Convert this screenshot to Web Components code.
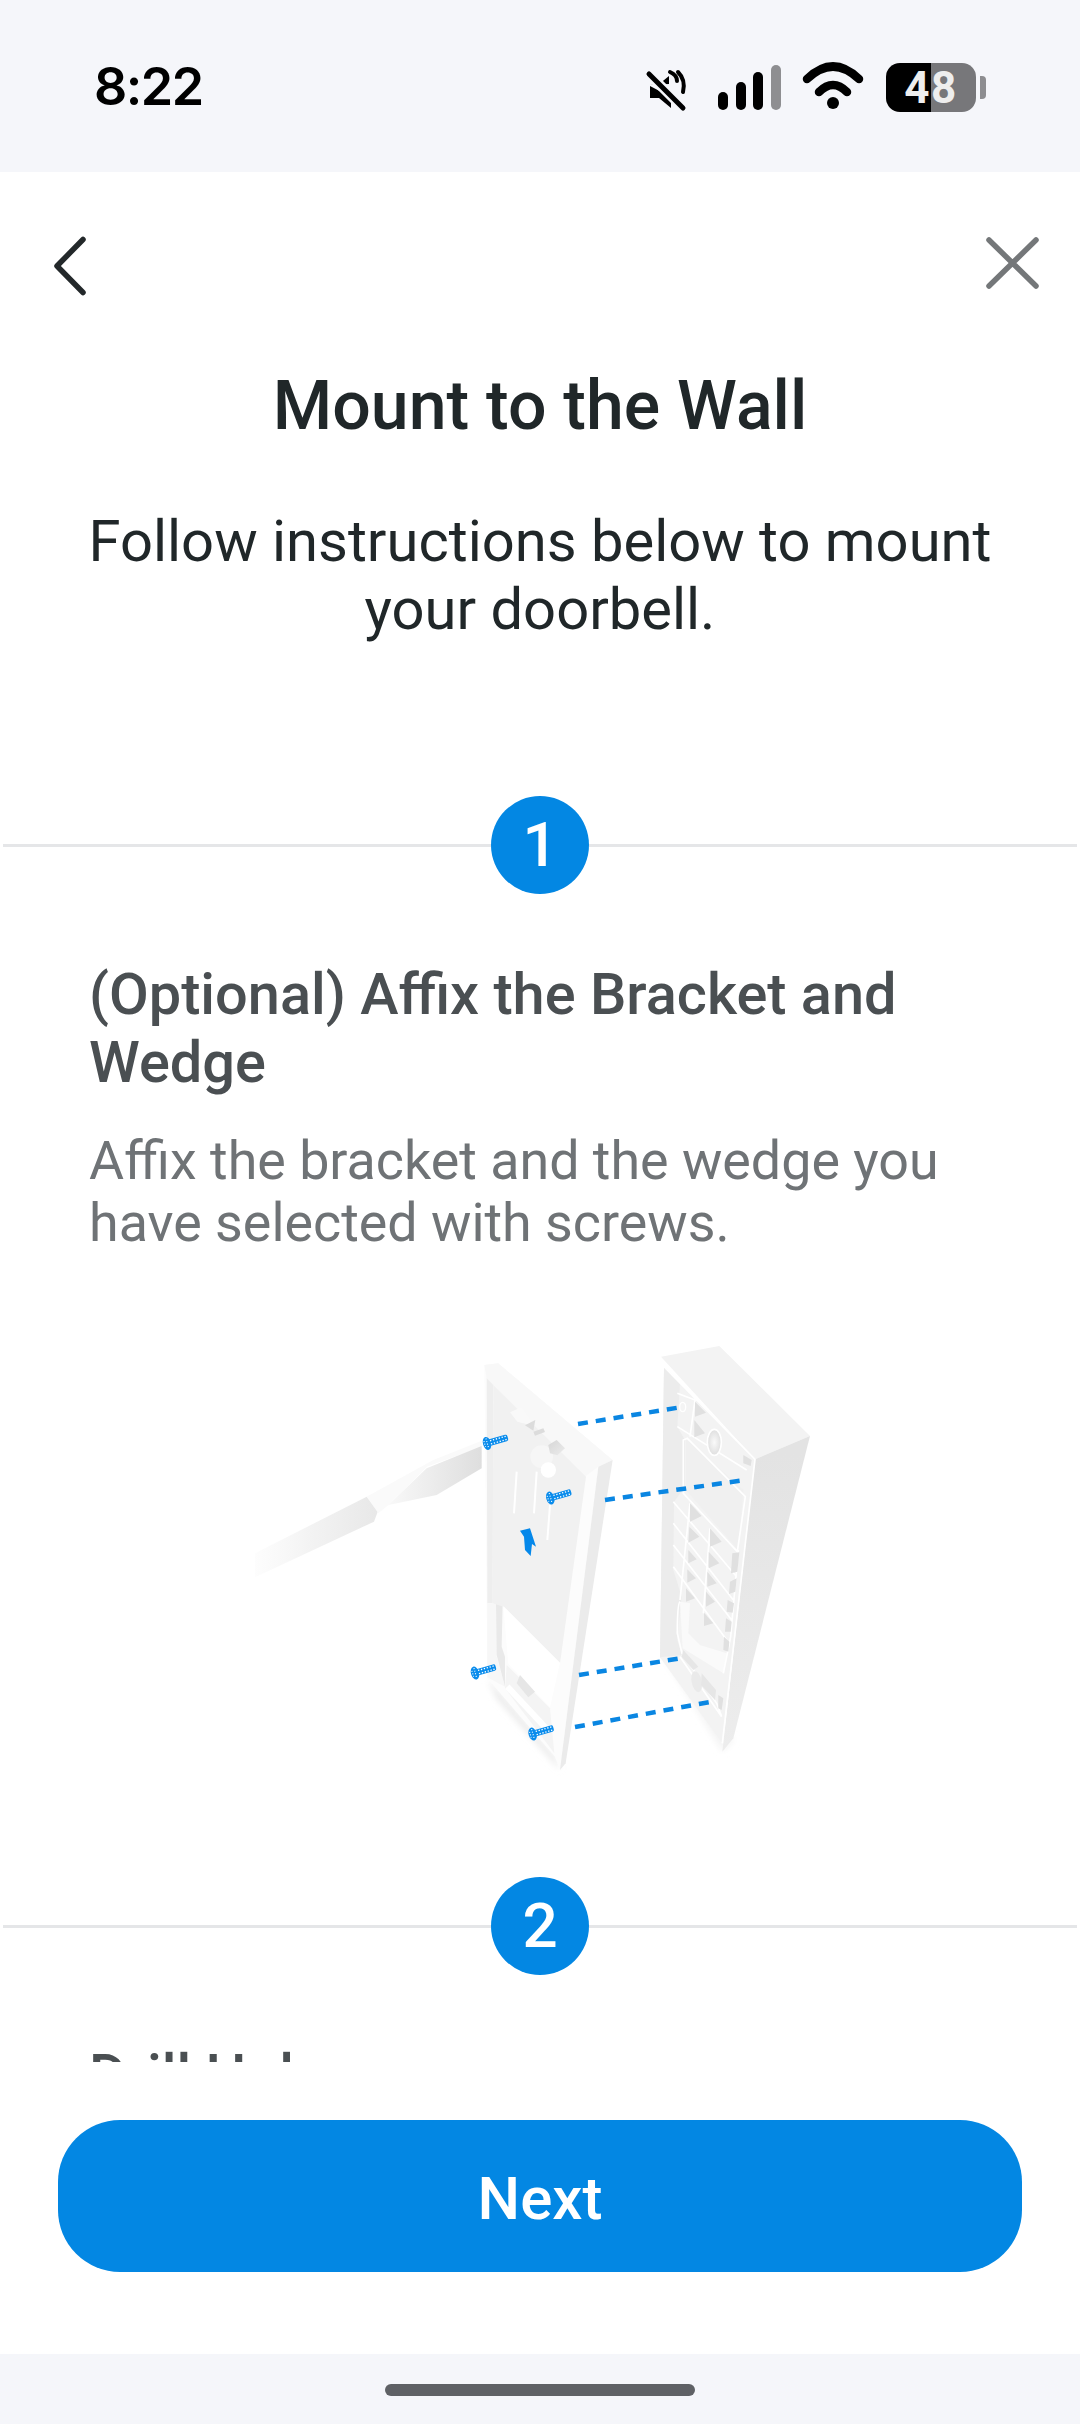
<!DOCTYPE html>
<html>
<head>
<meta charset="utf-8">
<title>Mount to the Wall</title>
<style>
    html, body { margin: 0; padding: 0; background: #fff; }
    body { font-family: Roboto, "Liberation Sans", sans-serif; }
</style>
</head>
<body>
<app-screen>
    <status-bar slot="top"></status-bar>
    <nav-bar></nav-bar>
    <page-intro heading="Mount to the Wall">Follow instructions below to mount your doorbell.</page-intro>
    <step-block number="1" heading="(Optional) Affix the Bracket and Wedge">
        Affix the bracket and the wedge you have selected with screws.
        <mount-figure slot="figure"></mount-figure>
    </step-block>
    <step-block number="2" heading="Drill Holes"></step-block>
    <primary-button slot="bottom">Next</primary-button>
    <home-bar slot="end"></home-bar>
</app-screen>

<script>
class AppScreen extends HTMLElement
{
    constructor()
    {
        super();
        const Shadow = this.attachShadow({mode: "open"});
        Shadow.innerHTML = `
        <style>
            :host { display: flex; flex-direction: column; width: 1080px; height: 2424px; overflow: hidden; }
            .Scroll { flex: 1; min-height: 0; overflow: hidden; }
            .Footer { height: 292px; box-sizing: border-box; padding: 58px 58px 0; }
        </style>
        <slot name="top"></slot>
        <div class="Scroll"><slot></slot></div>
        <div class="Footer"><slot name="bottom"></slot></div>
        <slot name="end"></slot>
        `;
    }
}

class StatusBar extends HTMLElement
{
    constructor()
    {
        super();
        const Shadow = this.attachShadow({mode: "open"});
        Shadow.innerHTML = `
        <style>
            :host { display: flex; align-items: flex-start; height: 172px; background: #f5f6fa; color: #000; }
            .Time { margin: 52px 0 0 94px; font: 600 52px/70px Inter, Roboto, sans-serif; letter-spacing: -1.5px; flex: 1; }
            svg { display: block; margin-top: 60px; }
            .Battery {
                margin: 63px 0 0 1px;
                width: 90px;
                height: 49px;
                border-radius: 14px;
                background: linear-gradient(90deg, #000 50%, #77777a 50%);
                color: #eee;
                font: 700 44px/50px Roboto, sans-serif;
                text-align: center;
                letter-spacing: 1.5px;
            }
            .Nub { margin: 76px 94px 0 4px; width: 6px; height: 23px; border-radius: 0 4px 4px 0; background: #8d8d90; }
        </style>
        <div class="Time">8:22</div>
        <svg width="240" height="56" viewBox="645 60 240 56">
            <path d="M650 85h8l11-9v8zM650 86v12h9l12 10V97z" fill="#000"/>
            <path d="M670 72q7 3 7 9M678 72q8 8 5 20" fill="none" stroke="#000" stroke-width="4" stroke-linecap="round"/>
            <path d="M649 74l34 34" stroke="#f5f6fa" stroke-width="10"/>
            <path d="M649 74l34 34" stroke="#000" stroke-width="5" stroke-linecap="round"/>
            <rect x="718" y="92" width="10" height="18" rx="5"/>
            <rect x="736" y="82" width="10" height="28" rx="5"/>
            <rect x="753" y="72" width="10" height="38" rx="5"/>
            <rect x="771" y="65" width="10" height="45" rx="5" fill="#8e8e91"/>
            <path d="M807 79Q833 54 859 79M819 92Q833 78 847 92" fill="none" stroke="#000" stroke-width="8.5" stroke-linecap="round"/>
            <circle cx="833" cy="103" r="6"/>
        </svg>
        <div class="Battery">48</div>
        <div class="Nub"></div>
        `;
    }
}

class NavBar extends HTMLElement
{
    constructor()
    {
        super();
        const Shadow = this.attachShadow({mode: "open"});
        Shadow.innerHTML = `
        <style>
            :host { display: flex; justify-content: space-between; align-items: flex-start; height: 194px; box-sizing: border-box; padding: 60px 38px 0 48px; }
            svg { display: block; fill: none; stroke-linecap: round; stroke-linejoin: round; }
        </style>
        <svg width="44" height="66" viewBox="0 0 44 66"><path d="M35 7.500L9 34L35 60.500" stroke="#23282a" stroke-width="5.500"/></svg>
        <svg width="58" height="60" viewBox="0 0 58 60"><path d="M5 8L52 54M52 8L5 54" stroke="#747779" stroke-width="5.500"/></svg>
        `;
    }
}

class PageIntro extends HTMLElement
{
    constructor()
    {
        super();
        const Shadow = this.attachShadow({mode: "open"});
        Shadow.innerHTML = `
        <style>
            :host { display: block; padding: 0 80px 153px; text-align: center; }
            h1 { margin: 0 0 61px; font: 500 68px/80px Roboto, sans-serif; color: #202729; }
            p { margin: 0; font: 400 57.900px/68px Roboto, sans-serif; color: #202729; }
        </style>
        <h1></h1>
        <p><slot></slot></p>
        `;
        Shadow.querySelector("h1").textContent = this.getAttribute("heading");
    }
}

class StepBlock extends HTMLElement
{
    constructor()
    {
        super();
        const Shadow = this.attachShadow({mode: "open"});
        Shadow.innerHTML = `
        <style>
            :host { display: block; }
            .Marker { display: flex; align-items: center; padding: 0 3px; }
            .Line { flex: 1; height: 3px; background: #e5e6e8; }
            .Number {
                width: 98px;
                height: 98px;
                border-radius: 50%;
                background: #0387e3;
                color: #fff;
                font: 500 62px/98px Roboto, sans-serif;
                text-align: center;
            }
            .Text { padding: 66px 90px 0 89px; }
            h2 { margin: 0 0 34px; font: 500 57.700px/68px Roboto, sans-serif; color: #4a4f52; }
            p { margin: 0; font: 400 53.800px/62px Roboto, sans-serif; color: #6f7376; }
        </style>
        <div class="Marker"><div class="Line"></div><div class="Number"></div><div class="Line"></div></div>
        <div class="Text"><h2></h2><p><slot></slot></p></div>
        <slot name="figure"></slot>
        `;
        Shadow.querySelector(".Number").textContent = this.getAttribute("number");
        Shadow.querySelector("h2").textContent = this.getAttribute("heading");
    }
}

class MountFigure extends HTMLElement
{
    constructor()
    {
        super();
        const Shadow = this.attachShadow({mode: "open"});

        //螺丝
        const Screw = (x, y) => `
            <g transform="translate(${x} ${y}) rotate(-16)" fill="#0a8cec">
                <rect x="4" y="-10" width="64" height="20" rx="6"/>
                <ellipse cx="3" cy="0" rx="12" ry="20"/>
                <path d="M14 -5H66M14 5H66" stroke="#fff" stroke-width="4" stroke-dasharray="4 5" fill="none"/>
                <path d="M4 -15V15M-4 -9V9" stroke="#fff" stroke-width="3.500" stroke-dasharray="3 5" fill="none"/>
            </g>`;

        //楔形支架上的三角
        const Tri = [
            "285,245 318,278 285,290", "283,300 315,340 283,352", "270,550 305,588 270,605",
            "268,620 298,650 265,668", "265,690 290,718 265,730", "262,748 288,775 262,788",
            "258,805 285,835 258,845", "330,625 365,665 330,680", "326,695 358,730 326,745",
            "322,755 350,790 322,800", "318,815 345,845 318,860", "312,878 340,910 312,918",
            "397,700 418,697 412,755 393,760", "390,785 410,775 406,815 387,822", "383,840 402,850 398,878 380,875",
            "378,895 395,905 392,935 375,935", "372,950 388,965 385,995 370,990", "355,1125 370,1135 365,1170 355,1165",
            "430,405 455,420 452,438 430,430"
        ].map(p => `<polygon points="${p}" fill="#e0e0e0"/>`).join("");

        Shadow.innerHTML = `
        <style>
            :host { display: block; margin: 66px 0 97px; height: 460px; }
            svg { display: block; }
        </style>
        <svg width="1080" height="460" viewBox="0 1320 1080 460">
            <defs>
                <linearGradient id="Shaft" x1="105" y1="0" x2="470" y2="0" gradientUnits="userSpaceOnUse">
                    <stop offset="0" stop-color="#f6f6f6" stop-opacity="0.25"/>
                    <stop offset="0.45" stop-color="#f3f3f3"/>
                    <stop offset="1" stop-color="#e8e8e8"/>
                </linearGradient>
                <linearGradient id="Blade" x1="510" y1="0" x2="785" y2="0" gradientUnits="userSpaceOnUse">
                    <stop offset="0" stop-color="#f8f8f8"/>
                    <stop offset="1" stop-color="#dedede"/>
                </linearGradient>
                <linearGradient id="Side" x1="0" y1="400" x2="0" y2="1300" gradientUnits="userSpaceOnUse">
                    <stop offset="0" stop-color="#e3e3e3"/>
                    <stop offset="1" stop-color="#ededed"/>
                </linearGradient>
                <linearGradient id="Key" x1="0" y1="0" x2="1" y2="1">
                    <stop offset="0" stop-color="#d6d6d6"/>
                    <stop offset="1" stop-color="#ececec"/>
                </linearGradient>
                <radialGradient id="Hole">
                    <stop offset="0" stop-color="#fafafa"/>
                    <stop offset="1" stop-color="#dfdfdf"/>
                </radialGradient>
                <filter id="Soft"><feGaussianBlur stdDeviation="9"/></filter>
            </defs>

            <!-- 楔形支架 -->
            <g transform="translate(600 1320) scale(.33333)">
                <polygon points="190,1010 367,1295 400,1262 240,1000" fill="#f4f4f4" filter="url(#Soft)"/>
                <polygon points="183,110 358,78 630,348 465,418" fill="#f3f3f3"/>
                <polygon points="465,418 630,348 400,1255 367,1295" fill="url(#Side)"/>
                <polygon points="192,140 465,418 367,1270 180,1012" fill="#f3f3f3"/>
                <polygon points="192,140 240,190 232,320 255,360 255,500 222,545 220,750 245,830 232,960 246,1005 180,1012" fill="#ececec"/>
                <polygon points="258,358 430,510 415,690 258,510" fill="#f0f0f0"/>
                <polygon points="240,845 270,850 265,940 300,975 380,1000 370,1060 248,985" fill="#fafafa"/>
                <path d="M192 140L465 418L367 1270M262 355L436 530L412 695L250 520V360ZM285 240L270 350M270 550L240 840M330 625L310 880M240 845Q232 850 232 940L246 1000L350 1150L365 1190M415 690L392 950L370 1060M240 1010L365 1190M220 545L410 770M220 610L400 840M220 675L395 900M220 740L380 960M232 320L440 450M232 220L285 240" fill="none" stroke="#fff" stroke-width="5"/>
                ${Tri}
                <ellipse cx="343" cy="367" rx="21" ry="39" fill="url(#Hole)" stroke="#fff" stroke-width="5"/>
                <ellipse cx="248" cy="261" rx="9" ry="14" fill="#f4f4f4" stroke="#fff" stroke-width="4"/>
                <ellipse cx="290" cy="1085" rx="15" ry="32" fill="#eaeaea" transform="rotate(-12 290 1085)"/>
                <polygon points="305,1060 348,1110 345,1140 303,1095" fill="#e6e6e6"/>
                <polygon points="250,990 295,1040 280,1050 245,1010" fill="#e6e6e6"/>
            </g>

            <!-- 底板和螺丝刀 -->
            <g transform="translate(220 1320) scale(.33333)">
                <polygon points="802,1075 1005,1310 1020,1350 830,1135" fill="#e9e9e9" filter="url(#Soft)"/>
                <polygon points="105,700 440,530 475,570 462,605 105,772" fill="url(#Shaft)"/>
                <polygon points="440,530 640,420 785,362 785,380 620,440 505,555 475,580" fill="#fafafa"/>
                <polygon points="505,555 620,445 785,378 785,445 650,525" fill="url(#Blade)"/>

                <polygon points="793,135 835,130 1178,420 1135,440 1020,1350 1005,1310 802,1075" fill="#fcfcfc"/>
                <polygon points="793,135 835,130 1178,420 1135,440 1095,470 820,195 800,175" fill="#f8f8f8"/>
                <polygon points="1135,440 1178,420 1037,1330 1020,1350" fill="#ebebeb"/>
                <polygon points="800,175 820,195 818,850 802,850" fill="#eeeeee"/>
                <polygon points="802,850 828,850 830,1010 855,1100 802,1072" fill="#f7f7f7"/>
                <polygon points="828,850 848,850 845,980 855,1010 855,1100 830,1005" fill="#e9e9e9"/>
                <polygon points="820,195 1098,470 1020,1030 850,860 818,850" fill="#f1f1f1"/>
                <polygon points="850,858 1020,1028 990,1162 865,1032" fill="#ffffff"/>
                <polygon points="860,1035 990,1165 1003,1300 855,1105" fill="#f4f4f4"/>
                <polygon points="900,1065 945,1115 925,1132 890,1090" fill="#e6e6e6"/>
                <path d="M862 1100L985 1232" stroke="#fff" stroke-width="18" fill="none"/>
                <polygon points="870,277 905,262 942,318 892,305" fill="#f9f9f9"/>
                <polygon points="915,316 946,300 940,332" fill="#dcdcdc"/>
                <polygon points="940,335 970,325 975,336 945,347" fill="#dcdcdc"/>
                <circle cx="965" cy="410" r="34" fill="#f6f6f6"/>
                <polygon points="985,375 1010,360 1035,385 1012,406 990,400" fill="url(#Key)"/>
                <circle cx="985" cy="450" r="23" fill="#fff"/>
                <path d="M890 455L882 580M950 455L942 580M990 555L982 660" stroke="#fff" stroke-width="6" fill="none"/>
                <polygon points="900,632 930,625 948,680 936,672 932,708 915,690 912,650" fill="#0588ea"/>
            </g>

            <g fill="none" stroke="#0a86e2" stroke-width="4.500" stroke-dasharray="10 8">
                <path d="M578 1424L682 1407"/>
                <path d="M605 1500L745 1480"/>
                <path d="M579 1675L682 1658"/>
                <path d="M575 1727L715 1701"/>
            </g>

            <g transform="translate(220 1320) scale(.33333)">
                ${Screw(798, 371)}
                ${Screw(988, 535)}
                ${Screw(762, 1060)}
                ${Screw(935, 1243)}
            </g>
        </svg>
        `;
    }
}

class PrimaryButton extends HTMLElement
{
    constructor()
    {
        super();
        const Shadow = this.attachShadow({mode: "open"});
        Shadow.innerHTML = `
        <style>
            :host {
                display: flex;
                align-items: center;
                justify-content: center;
                box-sizing: border-box;
                height: 152px;
                padding-top: 4px;
                border-radius: 62px;
                background: #0387e3;
                color: #fff;
                font: 500 60px Roboto, sans-serif;
            }
        </style>
        <slot></slot>
        `;
    }
}

class HomeBar extends HTMLElement
{
    constructor()
    {
        super();
        const Shadow = this.attachShadow({mode: "open"});
        Shadow.innerHTML = `
        <style>
            :host { display: flex; justify-content: center; height: 70px; box-sizing: border-box; padding-top: 30px; background: #f5f6fa; }
            div { width: 310px; height: 12px; border-radius: 6px; background: #5f6165; }
        </style>
        <div></div>
        `;
    }
}

customElements.define("app-screen", AppScreen);
customElements.define("status-bar", StatusBar);
customElements.define("nav-bar", NavBar);
customElements.define("page-intro", PageIntro);
customElements.define("step-block", StepBlock);
customElements.define("mount-figure", MountFigure);
customElements.define("primary-button", PrimaryButton);
customElements.define("home-bar", HomeBar);
</script>
</body>
</html>
